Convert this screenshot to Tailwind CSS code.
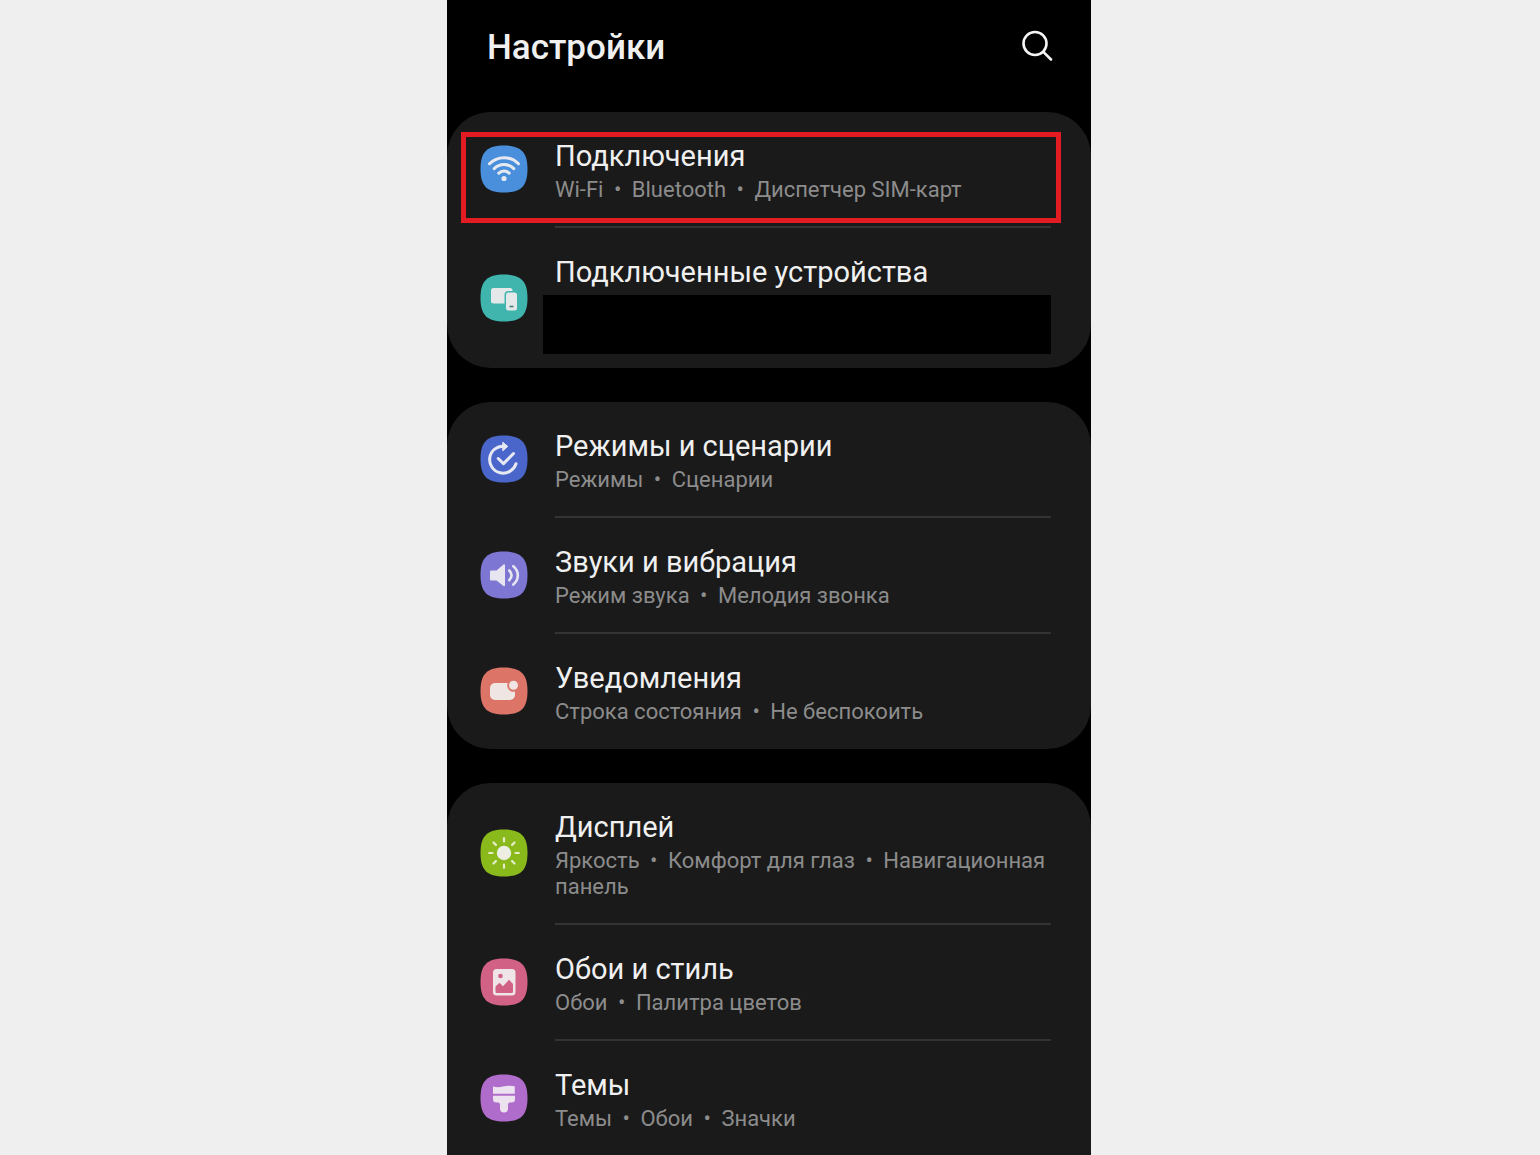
<!DOCTYPE html>
<html lang="ru">
<head>
  <meta charset="UTF-8" />
  <meta name="viewport" content="width=device-width, initial-scale=1.0" />
  <title>Настройки</title>
  <script src="https://cdn.jsdelivr.net/npm/@tailwindcss/browser@4"></script>
</head>
<body class="bg-[#efefef] pr-0.5 font-['Roboto',sans-serif]">

  <div class="max-w-[644px] mx-auto h-screen overflow-hidden bg-black text-[#f0f0f0]">

    <header class="h-24 mb-4 pl-10 pr-9 flex items-center justify-between">
      <h1 class="text-[35px] font-medium">Настройки</h1>
      <button type="button" aria-label="Поиск" class="size-9 flex items-center justify-center">
        <svg class="size-9" viewBox="0 0 36 36" fill="none" stroke="#f4f4f4" stroke-width="2.6" stroke-linecap="round">
          <circle cx="16" cy="13.500" r="11.500" />
          <path d="M24.300 21.800 32 29.500" />
        </svg>
      </button>
    </header>

    <main class="flex flex-col gap-[34px]">

      <!-- Подключения -->
      <ul class="bg-[#1a1a1a] rounded-[44px]">
        <li class="relative">
          <a href="#connections" class="flex items-center gap-[27px] pl-[33px] pr-10">
            <svg class="size-12 mb-0.5 shrink-0" viewBox="0 0 48 48" fill="none">
              <path d="M24 .5C41 .5 47.500 7 47.500 24S41 47.500 24 47.500.5 41 .5 24 7 .5 24 .5Z" fill="#4a8fdb" />
              <g stroke="#e6eaf0" stroke-width="3" stroke-linecap="round">
                <path d="M9.500 18.800C17.500 10.700 30.500 10.700 38.500 18.800" />
                <path d="M14.200 23.600C19.700 18.100 28.300 18.100 33.800 23.600" />
                <path d="M18.800 28.200C21.800 25.300 26.200 25.300 29.200 28.200" />
              </g>
              <circle cx="24" cy="33.500" r="2.600" fill="#e6eaf0" />
            </svg>
            <div class="grow pt-6 pb-[23px] border-b-2 border-[#333]">
              <h2 class="text-[29px] leading-10">Подключения</h2>
              <p class="mt-px text-[22px] leading-[26px] text-[#8c8c8c]">Wi-Fi <span class="mx-[5px]">•</span> Bluetooth <span class="mx-[5px]">•</span> Диспетчер SIM-карт</p>
            </div>
          </a>
          <div class="absolute top-5 left-3.5 right-[30px] h-[91px] border-[5px] border-[#e31b23] pointer-events-none"></div>
        </li>
        <li>
          <a href="#devices" class="flex items-center gap-[27px] pl-[33px] pr-10">
            <svg class="size-12 shrink-0" viewBox="0 0 48 48" fill="none">
              <path d="M24 .5C41 .5 47.500 7 47.500 24S41 47.500 24 47.500.5 41 .5 24 7 .5 24 .5Z" fill="#40b5ae" />
              <rect x="11" y="14" width="21.500" height="15.500" rx="2.500" fill="#e4e8e8" />
              <rect x="24.500" y="17" width="14" height="21" rx="4" fill="#40b5ae" />
              <rect x="26" y="18.500" width="11" height="18" rx="2.500" fill="#e4e8e8" />
              <path d="M29.500 32.500h4" stroke="#40807c" stroke-width="1.600" />
            </svg>
            <div class="grow pt-6 pb-3.5">
              <h2 class="text-[29px] leading-10">Подключенные устройства</h2>
              <div class="-ml-3 mt-[3px] h-[59px] bg-black"></div>
            </div>
          </a>
        </li>
      </ul>

      <!-- Режимы, звуки, уведомления -->
      <ul class="bg-[#1a1a1a] rounded-[44px]">
        <li>
          <a href="#modes" class="flex items-center gap-[27px] pl-[33px] pr-10">
            <svg class="size-12 mb-0.5 shrink-0" viewBox="0 0 48 48" fill="none">
              <path d="M24 .5C41 .5 47.500 7 47.500 24S41 47.500 24 47.500.5 41 .5 24 7 .5 24 .5Z" fill="#4a66cb" />
              <g stroke="#e6e8f2" stroke-width="3" stroke-linecap="round" stroke-linejoin="round">
                <path d="M24 11.200A13.500 13.500 0 1 0 36 28.800" />
                <path d="M18.200 23.500 23.500 28.600 33.500 18.500" />
              </g>
              <path d="M22.800 7.300 27.800 11.400 22.800 15.800Z" fill="#e6e8f2" stroke="#e6e8f2" stroke-linejoin="round" />
            </svg>
            <div class="grow pt-6 pb-[23px] border-b-2 border-[#333]">
              <h2 class="text-[29px] leading-10">Режимы и сценарии</h2>
              <p class="mt-px text-[22px] leading-[26px] text-[#8c8c8c]">Режимы <span class="mx-[5px]">•</span> Сценарии</p>
            </div>
          </a>
        </li>
        <li>
          <a href="#sounds" class="flex items-center gap-[27px] pl-[33px] pr-10">
            <svg class="size-12 mb-0.5 shrink-0" viewBox="0 0 48 48" fill="none">
              <path d="M24 .5C41 .5 47.500 7 47.500 24S41 47.500 24 47.500.5 41 .5 24 7 .5 24 .5Z" fill="#7d76d3" />
              <path d="M11 19.500H16.500L23.500 13.500Q25 12.500 25 14.500V34Q25 36 23.500 35L16.500 29.500H11Q10 29.500 10 28.500V20.500Q10 19.500 11 19.500Z" fill="#e6e5f0" />
              <g stroke="#e6e5f0" stroke-width="2.600" stroke-linecap="round">
                <path d="M29.300 19.500Q33.800 24.300 29.300 29.200" />
                <path d="M33.300 15.200C39.300 20.200 39.300 28.500 33.300 33.600" />
              </g>
            </svg>
            <div class="grow pt-6 pb-[23px] border-b-2 border-[#333]">
              <h2 class="text-[29px] leading-10">Звуки и вибрация</h2>
              <p class="mt-px text-[22px] leading-[26px] text-[#8c8c8c]">Режим звука <span class="mx-[5px]">•</span> Мелодия звонка</p>
            </div>
          </a>
        </li>
        <li>
          <a href="#notifications" class="flex items-center gap-[27px] pl-[33px] pr-10">
            <svg class="size-12 mb-0.5 shrink-0" viewBox="0 0 48 48" fill="none">
              <path d="M24 .5C41 .5 47.500 7 47.500 24S41 47.500 24 47.500.5 41 .5 24 7 .5 24 .5Z" fill="#dc7468" />
              <rect x="10" y="16" width="25" height="17" rx="5" fill="#efe6e4" />
              <circle cx="33.500" cy="18.500" r="6.300" fill="#dc7468" />
              <circle cx="33.500" cy="18.300" r="4.500" fill="#efe6e4" />
            </svg>
            <div class="grow pt-6 pb-6">
              <h2 class="text-[29px] leading-10">Уведомления</h2>
              <p class="mt-px text-[22px] leading-[26px] text-[#8c8c8c]">Строка состояния <span class="mx-[5px]">•</span> Не беспокоить</p>
            </div>
          </a>
        </li>
      </ul>

      <!-- Дисплей, обои, темы -->
      <ul class="bg-[#1a1a1a] rounded-t-[44px]">
        <li>
          <a href="#display" class="flex items-center gap-[27px] pl-[33px] pr-10">
            <svg class="size-12 mb-0.5 shrink-0" viewBox="0 0 48 48" fill="none">
              <path d="M24 .5C41 .5 47.500 7 47.500 24S41 47.500 24 47.500.5 41 .5 24 7 .5 24 .5Z" fill="#8ab91c" />
              <circle cx="24" cy="24" r="7.200" fill="#eceee4" />
              <path d="M24 9.200v3.300M24 35.500v3.300M9.200 24h3.300M35.500 24h3.300M13.500 13.500l2.400 2.400M32.100 32.100l2.400 2.400M13.500 34.500l2.400-2.400M32.100 15.900l2.400-2.400" stroke="#e4ecc8" stroke-width="2.200" stroke-linecap="round" />
            </svg>
            <div class="grow pt-6 pb-[23px] border-b-2 border-[#333]">
              <h2 class="text-[29px] leading-10">Дисплей</h2>
              <p class="mt-px text-[22px] leading-[26px] text-[#8c8c8c]">Яркость <span class="mx-[5px]">•</span> Комфорт для глаз <span class="mx-[5px]">•</span> Навигационная панель</p>
            </div>
          </a>
        </li>
        <li>
          <a href="#wallpaper" class="flex items-center gap-[27px] pl-[33px] pr-10">
            <svg class="size-12 mb-0.5 shrink-0" viewBox="0 0 48 48" fill="none">
              <path d="M24 .5C41 .5 47.500 7 47.500 24S41 47.500 24 47.500.5 41 .5 24 7 .5 24 .5Z" fill="#d16285" />
              <rect x="13" y="11" width="22.500" height="26.500" rx="3.500" fill="#efe4e8" />
              <circle cx="20.500" cy="18" r="2.300" fill="#d16285" />
              <path d="M15.500 28.500 19.500 24.800 23 28.300 29 21.800 33 26V33.500Q33 35 31.500 35H17Q15.500 35 15.500 33.500Z" fill="#d16285" />
            </svg>
            <div class="grow pt-6 pb-[23px] border-b-2 border-[#333]">
              <h2 class="text-[29px] leading-10">Обои и стиль</h2>
              <p class="mt-px text-[22px] leading-[26px] text-[#8c8c8c]">Обои <span class="mx-[5px]">•</span> Палитра цветов</p>
            </div>
          </a>
        </li>
        <li>
          <a href="#themes" class="flex items-center gap-[27px] pl-[33px] pr-10">
            <svg class="size-12 mb-0.5 shrink-0" viewBox="0 0 48 48" fill="none">
              <path d="M24 .5C41 .5 47.500 7 47.500 24S41 47.500 24 47.500.5 41 .5 24 7 .5 24 .5Z" fill="#b06cca" />
              <path d="M13 12.500Q18 14 23 12.600T34.800 12.200V19.800H13Z" fill="#ece2f0" />
              <path d="M13 21.800H35V25Q35 28.500 31.500 28.500H30Q28 28.500 28 30.500V34.500A4 4 0 0 1 20 34.500V30.500Q20 28.500 18 28.500H16.500Q13 28.500 13 25Z" fill="#ece2f0" />
            </svg>
            <div class="grow pt-6 pb-[23px] border-b-2 border-[#333]">
              <h2 class="text-[29px] leading-10">Темы</h2>
              <p class="mt-px text-[22px] leading-[26px] text-[#8c8c8c]">Темы <span class="mx-[5px]">•</span> Обои <span class="mx-[5px]">•</span> Значки</p>
            </div>
          </a>
        </li>
      </ul>

    </main>
  </div>

</body>
</html>
